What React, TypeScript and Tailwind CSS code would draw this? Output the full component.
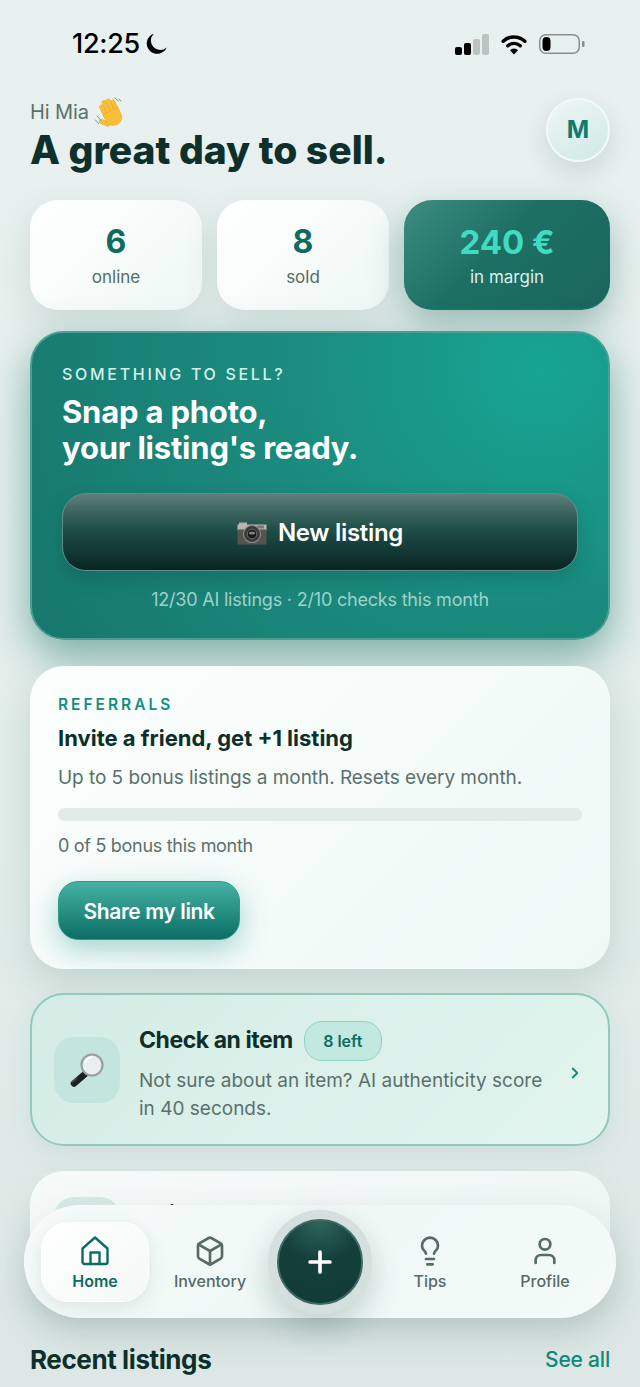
import { Box, ChevronRight, Lightbulb, Plus, User } from "lucide-react";
import type { ReactNode } from "react";

const font = { fontFamily: "Inter, 'Noto Sans', sans-serif" };

function StatusBar() {
  return (
    <div className="flex h-[88px] items-center justify-between pl-[72px] pr-[55px] text-black">
      <div className="flex items-center gap-[4px]">
        <span className="text-[27px] font-medium tracking-[-0.3px]">12:25</span>
        <svg width="24" height="24" viewBox="0 0 22 22">
          <path d="M9 1.500a9.500 9.500 0 1 0 11.800 12.600A8.600 8.600 0 0 1 9 1.500z" fill="#000" />
        </svg>
      </div>
      <div className="flex items-center gap-[11px]">
        <svg width="34" height="22" viewBox="0 0 34 22">
          <rect x="0" y="14" width="7" height="8" rx="2" fill="#000" />
          <rect x="9" y="10" width="7" height="12" rx="2" fill="#000" />
          <rect x="18" y="6" width="7" height="16" rx="2" fill="#bcc4c2" />
          <rect x="27" y="1" width="7" height="21" rx="2" fill="#bcc4c2" />
        </svg>
        <svg width="28" height="22" viewBox="0 0 28 22">
          <path d="M14 4c4.200 0 8 1.600 10.800 4.200M3.200 8.200A15.800 15.800 0 0 1 14 4" fill="none" stroke="#000" strokeWidth="3.600" strokeLinecap="round" />
          <path d="M7.800 12.800A9.200 9.200 0 0 1 20.200 12.800" fill="none" stroke="#000" strokeWidth="3.400" strokeLinecap="round" />
          <path d="M10 17.200a5.700 5.700 0 0 1 8 0L14 21.500z" fill="#000" />
        </svg>
        <svg width="46" height="22" viewBox="0 0 46 22">
          <rect x="0.750" y="1.750" width="39.500" height="18.500" rx="6" fill="none" stroke="#8a8f8e" strokeWidth="1.500" />
          <rect x="3.500" y="4" width="8" height="14" rx="4" fill="#000" />
          <rect x="43" y="8" width="2.500" height="6" rx="1.200" fill="#8a8f8e" />
        </svg>
      </div>
    </div>
  );
}

function WaveEmoji() {
  return (
    <svg width="30" height="30" viewBox="0 0 30 30" className="ml-[5px]">
      <g fill="#f8c03a" stroke="#e9a322" strokeWidth="0.500" transform="rotate(-26 17 17)">
        <rect x="9.500" y="4.500" width="4.300" height="15" rx="2.100" />
        <rect x="13.600" y="1.500" width="4.400" height="17" rx="2.200" />
        <rect x="17.800" y="2" width="4.400" height="17" rx="2.200" />
        <rect x="22" y="5" width="4" height="14" rx="2" />
        <rect x="4" y="15.500" width="4.200" height="11" rx="2.100" transform="rotate(-42 8 20)" />
        <path d="M9.500 14h16.500v7c0 5-3.500 8-8.200 8s-8.300-3-8.300-8z" />
      </g>
      <path d="M3 19l4 4.500M1.500 23l3 3.500M21 1l3.500 3M25 2l2 2" stroke="#7f9290" strokeWidth="1" strokeLinecap="round" fill="none" />
    </svg>
  );
}

function CameraEmoji() {
  return (
    <svg width="30" height="23" viewBox="0 0 30 23" className="mr-[11px]">
      <rect x="2" y="0.500" width="8" height="3" fill="#b5b2ac" />
      <rect x="0.500" y="2.500" width="29" height="6" fill="#b9b6b0" />
      <rect x="0.500" y="7.500" width="29" height="15" fill="#55534f" />
      <rect x="20" y="3.500" width="7" height="3" fill="#6f7a7a" />
      <circle cx="15" cy="12" r="8.500" fill="#3a3937" stroke="#8d8b86" strokeWidth="1.200" />
      <circle cx="15" cy="12" r="4.800" fill="#191919" stroke="#6b6a67" strokeWidth="1" />
      <ellipse cx="15" cy="11" rx="3" ry="1.500" fill="#7b8385" />
    </svg>
  );
}

function MagnifierEmoji() {
  return (
    <svg width="36" height="36" viewBox="0 0 36 36">
      <path d="M16 22L5 31.500" stroke="#1f1f1f" strokeWidth="6.500" strokeLinecap="round" />
      <path d="M8 26L3.500 30" stroke="#4a4a4a" strokeWidth="1.500" strokeLinecap="round" />
      <circle cx="23" cy="13" r="10.500" fill="#eaeeee" stroke="#9a9f9e" strokeWidth="2.200" />
      <path d="M16 11a8 8 0 0 1 7-6" stroke="#fff" strokeWidth="1.500" fill="none" />
    </svg>
  );
}

function Stat({ value, label }: { value: string; label: string }) {
  return (
    <div className="flex h-[110px] w-[172px] flex-col items-center rounded-[28px] bg-[linear-gradient(135deg,#ffffff,#eef8f5)] pt-[24px] shadow-[0_14px_36px_rgba(30,80,70,0.12)]">
      <div className="text-[32px] font-bold leading-[36px] text-[#0f6b61]">{value}</div>
      <div className="mt-[5px] text-[17px] leading-[24px] text-[#566a66]">{label}</div>
    </div>
  );
}

function NavItem({ icon, label, active }: { icon: ReactNode; label: string; active?: boolean }) {
  return (
    <div
      className={`flex h-[78px] w-[106px] flex-col items-center justify-start pt-[12px] ${
        active
          ? "rounded-[26px] bg-[linear-gradient(135deg,#ffffff,#f3f8f6)] font-semibold text-[#0f6b61] shadow-[0_6px_20px_rgba(30,80,70,0.12)] ring-1 ring-white"
          : "font-medium text-[#566a66]"
      }`}
    >
      <div className="flex h-[32px] items-center">{icon}</div>
      <div className="mt-[4px] text-[16px] leading-[20px]">{label}</div>
    </div>
  );
}

function HomeIcon() {
  return (
    <svg width="32" height="32" viewBox="0 0 32 32" fill="none" stroke="currentColor" strokeWidth="2.400" strokeLinejoin="round" strokeLinecap="round">
      <path d="M3.500 13.500L16 2.500l12.500 11V27a2 2 0 0 1-2 2h-21a2 2 0 0 1-2-2z" />
      <path d="M11.500 29V17.500h9V29" />
    </svg>
  );
}

export default function App() {
  return (
    <div
      className="relative h-[1387px] w-[640px] overflow-hidden bg-[linear-gradient(180deg,#e8f1ef,#e3eeeb_60%,#dde8e6)]"
      style={font}
    >
      <StatusBar />
      <div className="flex flex-col px-[30px]">
        <div className="flex items-start justify-between">
          <div className="pt-[8px]">
            <div className="flex h-[32px] items-center text-[20px] tracking-[-0.1px] text-[#5b706c]">
              Hi Mia
              <WaveEmoji />
            </div>
            <h1 className="-mt-[1px] mb-[1px] text-[39px] font-extrabold leading-[46px] tracking-[0px] text-[#0e302c]">
              A great day to sell.
            </h1>
          </div>
          <div className="mt-[10px] flex h-[64px] w-[64px] items-center justify-center rounded-full border-[2px] border-[#f2f9f7] bg-[linear-gradient(150deg,#eef7f5,#cfe9e3)] text-[24px] font-bold text-[#0f7a6e] shadow-[0_10px_24px_rgba(30,80,70,0.14)]">
            M
          </div>
        </div>

        <div className="mt-[26px] flex gap-[15px]">
          <Stat value="6" label="online" />
          <Stat value="8" label="sold" />
          <div className="flex h-[110px] w-[206px] flex-col items-center rounded-[28px] border-b-[2px] border-[#1b7368] bg-[linear-gradient(135deg,#3d8d80,#1d6f64_45%,#1b665c)] pt-[24px] shadow-[0_14px_34px_rgba(20,90,80,0.35)]">
            <div className="text-[33px] font-bold leading-[36px] text-[#3fdcc2]">240 €</div>
            <div className="mt-[5px] text-[17px] leading-[24px] text-[#d8f2ec]">in margin</div>
          </div>
        </div>

        <div className="mt-[21px] h-[309px] rounded-[34px] border-[2px] border-[#4a9f92] bg-[radial-gradient(circle_at_88%_12%,#17a493,rgba(26,139,126,0.9)_45%,#17776c),linear-gradient(135deg,#2f9c8e,#17776c)] px-[30px] pt-[30px] shadow-[0_16px_42px_rgba(20,110,95,0.5)]">
          <div className="text-[16px] font-medium leading-[22px] tracking-[2.700px] text-[#d6efea]">SOMETHING TO SELL?</div>
          <div className="mt-[9px] text-[31px] font-bold leading-[36px] tracking-[-0.2px] text-white">
            Snap a photo,
            <br />
            your listing's ready.
          </div>
          <div className="mt-[27px] flex h-[78px] items-center justify-center rounded-[24px] border border-[#5f8f88] bg-[linear-gradient(180deg,#5f7e79,#1f4f49_45%,#0a2523)] pt-[2px] text-[24px] font-semibold tracking-[-0.3px] text-white shadow-[0_8px_18px_rgba(10,60,55,0.25)]">
            <CameraEmoji />
            New listing
          </div>
          <div className="mt-[16px] text-center text-[18px] leading-[26px] tracking-[-0.2px] text-[#9fd2ca]">
            12/30 AI listings · 2/10 checks this month
          </div>
        </div>

        <div className="mt-[26px] h-[303px] rounded-[34px] bg-[linear-gradient(135deg,#fbfefd,#eef9f6)] px-[28px] pt-[28px] shadow-[0_14px_40px_rgba(30,80,70,0.16)]">
          <div className="text-[15.500px] font-semibold leading-[22px] tracking-[3px] text-[#128d7f]">REFERRALS</div>
          <div className="mt-[7px] text-[22px] font-bold leading-[30px] tracking-[0px] text-[#0e2e2a]">Invite a friend, get +1 listing</div>
          <div className="mt-[11px] text-[19px] leading-[28px] tracking-[-0.05px] text-[#5b706c]">
            Up to 5 bonus listings a month. Resets every month.
          </div>
          <div className="mt-[16px] h-[13px] rounded-full bg-[#e1ebe8]" />
          <div className="mt-[13px] text-[18px] leading-[24px] tracking-[-0.3px] text-[#5b706c]">0 of 5 bonus this month</div>
          <div className="mt-[23px] flex h-[59px] w-[182px] items-center justify-center rounded-[20px] border border-[#2c9a8c] bg-[linear-gradient(180deg,#47b2a4,#0a6e64)] pt-[3px] text-[21px] font-semibold tracking-[-0.4px] text-white shadow-[0_10px_28px_rgba(20,140,125,0.35)]">
            Share my link
          </div>
        </div>

        <div className="mt-[24px] flex h-[153px] items-center rounded-[34px] border-[2px] border-[#8fcbbd] bg-[linear-gradient(135deg,#d4ece5,#e2f5ef)] pl-[22px] pr-[24px] shadow-[0_10px_30px_rgba(30,80,70,0.08)]">
          <div className="flex h-[66px] w-[66px] shrink-0 items-center justify-center rounded-[20px] bg-[#c4e5dd]">
            <MagnifierEmoji />
          </div>
          <div className="ml-[19px] flex-1 pt-[4px]">
            <div className="flex items-center gap-[11px]">
              <span className="text-[23px] font-bold tracking-[-0.45px] text-[#0e2e2a]">Check an item</span>
              <span className="flex h-[40px] w-[78px] items-center justify-center rounded-[18px] border border-[#8fd4c4] bg-[#c2e9df] text-[16px] font-semibold text-[#0f6b61]">8 left</span>
            </div>
            <div className="mt-[6px] text-[19px] leading-[28px] tracking-[0px] text-[#5b706c]">
              Not sure about an item? AI authenticity score
              <br />
              in 40 seconds.
            </div>
          </div>
          <ChevronRight size={18} strokeWidth={2.500} className="mt-[6px] text-[#12897b]" />
        </div>

        <div className="mt-[25px] flex h-[140px] items-start rounded-[34px] bg-[linear-gradient(135deg,#f6fbfa,#eef6f4)] pl-[24px] pt-[26px] shadow-[0_10px_30px_rgba(30,80,70,0.08)]">
          <div className="h-[66px] w-[66px] rounded-[20px] bg-[#d8ebe6]" />
          <div className="ml-[19px] mt-[5px] text-[23px] font-bold leading-[24px] text-[#0e2e2a]">Think I sell</div>
        </div>

        <div className="mt-[29px] flex items-center justify-between">
          <div className="text-[26px] font-bold tracking-[-0.4px] text-[#0e302c]">Recent listings</div>
          <div className="text-[21px] font-medium tracking-[-0.2px] text-[#12897b]">See all</div>
        </div>
      </div>

      {/* floating tab bar */}
      <div className="absolute left-[24px] top-[1205px] flex h-[113px] w-[592px] items-center gap-[5px] rounded-[56px] bg-[linear-gradient(135deg,#f6fbfa,#eef8f5_50%,#f4fbf9)] px-[18px] shadow-[0_16px_40px_rgba(30,70,60,0.16)]">
        <div className="mr-[4px]">
          <NavItem active icon={<HomeIcon />} label="Home" />
        </div>
        <NavItem icon={<Box size={32} strokeWidth={2} />} label="Inventory" />
        <div className="flex h-[104px] w-[104px] items-center justify-center rounded-full bg-[#d5e0de] shadow-[0_14px_30px_rgba(20,60,55,0.2)]">
          <div className="flex h-[86px] w-[86px] items-center justify-center rounded-full border-[2px] border-[#3d6a64] bg-[radial-gradient(circle_at_50%_0%,#2f655d,#143f3a_45%,#113a36)] text-white">
            <Plus size={34} strokeWidth={2.600} />
          </div>
        </div>
        <NavItem icon={<Lightbulb size={32} strokeWidth={2} />} label="Tips" />
        <div className="ml-[4px]">
          <NavItem icon={<User size={32} strokeWidth={2} />} label="Profile" />
        </div>
      </div>
    </div>
  );
}
